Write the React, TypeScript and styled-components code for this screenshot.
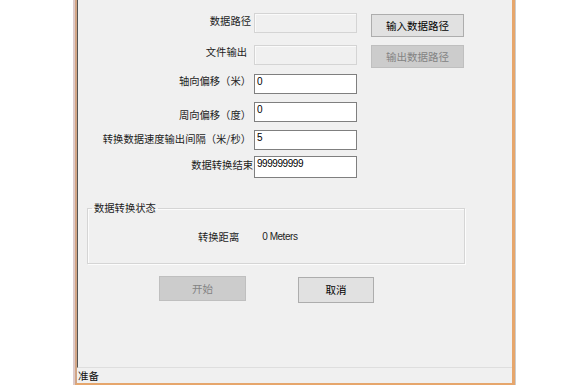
import React from "react";
import styled, { createGlobalStyle } from "styled-components";

const Global = createGlobalStyle`
  html, body { margin: 0; padding: 0; background: #ffffff; }
  body { font-family: "Noto Sans CJK SC", "Liberation Sans", sans-serif; }
`;

const Window = styled.div`
  margin-left: 73px;
  width: 443px;
  height: 385px;
  box-sizing: border-box;
  border-left: 2px solid #dccaca;
  border-right: 1px solid #cdcdcd;
  display: flex;
  flex-direction: column;
`;

const Frame = styled.div`
  flex: 1;
  display: flex;
  flex-direction: column;
  border-left: 2px solid #d2a585;
  border-right: 3px solid #e6a66c;
  border-bottom: 2px solid #e6a66c;
  background: #f0f0f0;
`;

const Body = styled.div`
  height: 368px;
  box-sizing: border-box;
  border-left: 1px solid #555555;
  border-bottom: 1px solid #dedede;
  padding-top: 13px;
  display: flex;
  flex-direction: column;
`;

const Row = styled.div<{ $h: number }>`
  display: flex;
  align-items: flex-start;
  height: ${(p) => p.$h}px;
`;

const Label = styled.div<{ $dy: number; $pr: number }>`
  width: 176px;
  box-sizing: border-box;
  padding-right: ${(p) => p.$pr}px;
  margin-top: ${(p) => p.$dy}px;
  text-align: right;
  font-size: 10.3px;
  line-height: 16px;
  color: #1c1c1c;
  white-space: nowrap;
`;

const TextBox = styled.input<{ $h: number }>`
  width: 103px;
  height: ${(p) => p.$h}px;
  box-sizing: border-box;
  margin: 0;
  padding: 0 2px ${(p) => p.$h - 15}px 2px;
  border: 1px solid #7f7f7f;
  border-radius: 0;
  background: #ffffff;
  font-family: "Liberation Sans", sans-serif;
  font-size: 10px;
  letter-spacing: -0.45px;
  line-height: 13px;
  color: #000000;
  outline: none;

  &:disabled {
    background: #f0f0f0;
    border-color: #d4d4d4;
    box-shadow: inset 1px 1px 0 #fafafa;
  }
`;

const Button = styled.button<{ $w: number; $h: number; $ml: number; $dy?: number }>`
  width: ${(p) => p.$w}px;
  height: ${(p) => p.$h}px;
  margin: ${(p) => p.$dy ?? 0}px 0 0 ${(p) => p.$ml}px;
  padding: 0;
  box-sizing: border-box;
  border: 1px solid #adadad;
  border-radius: 0;
  background: #e1e1e1;
  font-family: "Noto Sans CJK SC", sans-serif;
  font-size: 10.5px;
  line-height: 14px;
  color: #000000;

  &:disabled {
    background: #cccccc;
    border-color: #bfbfbf;
    color: #838383;
  }
`;

const Group = styled.fieldset`
  margin: 23px 0 0 9px;
  padding: 0;
  width: 378px;
  height: 63px;
  box-sizing: border-box;
  border: 1px solid #d5d5d5;
  box-shadow: inset 1px 1px 0 #fcfcfc, 1px 1px 0 #fcfcfc;
`;

const Legend = styled.legend`
  margin-left: 4px;
  padding: 0 2px;
  font-size: 10.3px;
  line-height: 14px;
  color: #1c1c1c;
`;

const StatusRow = styled.div`
  display: flex;
  gap: 23px;
  margin-top: 14px;
  padding-left: 110px;
  font-size: 10.3px;
  line-height: 16px;
  color: #1c1c1c;
`;

const Value = styled.span`
  font-family: "Liberation Sans", sans-serif;
  font-size: 10px;
  letter-spacing: -0.45px;
`;

const Actions = styled.div`
  display: flex;
  align-items: flex-start;
  margin-top: 12px;
`;

const StatusBar = styled.div`
  height: 15px;
  box-sizing: border-box;
  padding-left: 1px;
  font-size: 10.5px;
  line-height: 15px;
  color: #111111;
  background: #f0f0f0;
`;

const fields = [
  { label: "轴向偏移（米）", value: "0", h: 28, dy: -1, pr: 3, bh: 20 },
  { label: "周向偏移（度）", value: "0", h: 28, dy: 5, pr: 3, bh: 20 },
  { label: "转换数据速度输出间隔（米/秒）", value: "5", h: 26, dy: 1, pr: 3, bh: 20 },
  { label: "数据转换结束", value: "999999999", h: 22, dy: 1, pr: 1, bh: 22 },
];

export default function App() {
  return (
    <>
      <Global />
      <Window>
        <Frame>
          <Body>
            <Row $h={32}>
              <Label $dy={0} $pr={3}>数据路径</Label>
              <TextBox $h={20} disabled value="" readOnly />
              <Button $w={93} $h={23} $ml={14} $dy={1}>输入数据路径</Button>
            </Row>
            <Row $h={29}>
              <Label $dy={-1} $pr={7}>文件输出</Label>
              <TextBox $h={20} disabled value="" readOnly />
              <Button $w={93} $h={23} $ml={14} disabled>输出数据路径</Button>
            </Row>
            {fields.map((f) => (
              <Row key={f.label} $h={f.h}>
                <Label $dy={f.dy} $pr={f.pr}>{f.label}</Label>
                <TextBox $h={f.bh} value={f.value} readOnly />
              </Row>
            ))}
            <Group>
              <Legend>数据转换状态</Legend>
              <StatusRow>
                <span>转换距离</span>
                <Value>0 Meters</Value>
              </StatusRow>
            </Group>
            <Actions>
              <Button $w={87} $h={25} $ml={81} disabled>开始</Button>
              <Button $w={76} $h={26} $ml={52} $dy={1}>取消</Button>
            </Actions>
          </Body>
          <StatusBar>准备</StatusBar>
        </Frame>
      </Window>
    </>
  );
}
